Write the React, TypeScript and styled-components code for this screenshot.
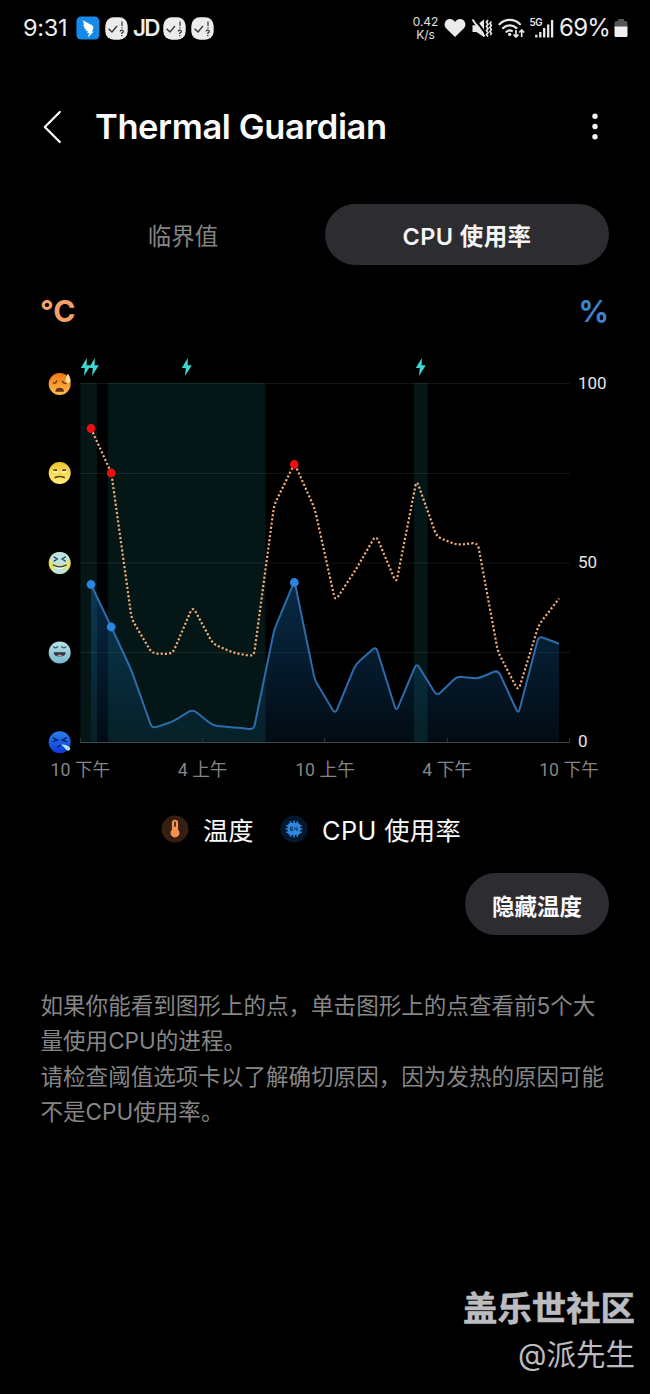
import React from "react";
import styled, { createGlobalStyle } from "styled-components";

const GlobalStyle = createGlobalStyle`
  *, *::before, *::after { box-sizing: border-box; }
  html, body { margin: 0; padding: 0; background: #000; }
  body {
    font-family: Inter, "Noto Sans CJK SC", sans-serif;
    color: #fafafa;
    overflow: hidden;
  }
`;

const Screen = styled.main`
  width: 650px;
  height: 1394px;
  display: flex;
  flex-direction: column;
  background: #000;
  overflow: hidden;
`;

const StatusBar = styled.div`
  height: 56px;
  flex: none;
  display: flex;
  align-items: center;
  justify-content: space-between;
  padding: 0 22px 0 23px;
`;

const StatusGroup = styled.div<{ $gap: number }>`
  display: flex;
  align-items: center;
  gap: ${(p) => p.$gap}px;
`;

const Clock = styled.span`
  font-size: 23.5px;
  line-height: 28px;
  width: 48px;
  letter-spacing: -0.3px;
  white-space: nowrap;
  color: #ececec;
`;

const JdLabel = styled.span`
  width: 25px;
  font-size: 22.5px;
  line-height: 26px;
  font-weight: 600;
  letter-spacing: -1.8px;
  text-align: center;
  color: #ececec;
`;

const NetSpeed = styled.span`
  width: 27px;
  font-size: 12px;
  line-height: 13px;
  letter-spacing: -0.1px;
  text-align: center;
  color: #e0e0e0;
  white-space: nowrap;
`;

const BatteryText = styled.span`
  width: 50px;
  font-size: 24px;
  line-height: 28px;
  letter-spacing: -0.7px;
  white-space: nowrap;
  color: #ececec;
`;

const Header = styled.header`
  height: 142px;
  flex: none;
  display: flex;
  align-items: center;
  padding: 0 45px 0 42px;
`;

const Title = styled.h1`
  flex: 1;
  margin: 0 0 0 32px;
  font-size: 34.5px;
  line-height: 44px;
  font-weight: 600;
  letter-spacing: -0.4px;
  white-space: nowrap;
`;

const Tabs = styled.nav`
  display: flex;
  flex: none;
  height: 61px;
  margin: 6px 41px 0;
`;

const Tab = styled.button<{ $active?: boolean }>`
  flex: 1;
  border: 0;
  padding: 4px 0 0;
  border-radius: 31px;
  background: ${(p) => (p.$active ? "#2d2c30" : "transparent")};
  color: ${(p) => (p.$active ? "#f5f5f5" : "#858585")};
  font: ${(p) => (p.$active ? 600 : 400)} 23.5px/30px Inter, "Noto Sans CJK SC", sans-serif;
  letter-spacing: ${(p) => (p.$active ? 0.4 : 0)}px;
`;

const Units = styled.div`
  display: flex;
  flex: none;
  justify-content: space-between;
  height: 85px;
  padding: 27px 41px 0 40px;
`;

const Unit = styled.span<{ $color: string }>`
  color: ${(p) => p.$color};
  font-size: 30px;
  line-height: 38px;
  font-weight: 700;
`;

const Chart = styled.svg`
  display: block;
  flex: none;
  width: 650px;
  height: 440px;
`;

const Legend = styled.div`
  display: flex;
  flex: none;
  align-items: center;
  height: 40px;
  margin: 19px 0 0 161px;
`;

const LegendItem = styled.div<{ $width: number }>`
  display: flex;
  align-items: center;
  gap: 14px;
  width: ${(p) => p.$width}px;
  font-size: 25.3px;
  line-height: 36px;
  white-space: nowrap;
`;

const LegendLabel = styled.span<{ $spacing?: number }>`
  padding-top: 4px;
  letter-spacing: ${(p) => p.$spacing ?? 0}px;
`;

const Actions = styled.div`
  display: flex;
  flex: none;
  justify-content: flex-end;
  margin: 24px 41px 0 0;
`;

const PillButton = styled.button`
  width: 144px;
  height: 62px;
  border: 0;
  border-radius: 31px;
  background: #2d2c30;
  color: #fafafa;
  padding: 5px 0 0;
  font: 700 22.5px/30px Inter, "Noto Sans CJK SC", sans-serif;
`;

const Notes = styled.section`
  flex: 1;
  margin: 53px 0 0 40.5px;
  font-size: 22.55px;
  line-height: 35.3px;
  color: #868686;
  white-space: nowrap;
`;

const NoteLine = styled.p`
  margin: 0;
`;

const Watermark = styled.footer`
  display: flex;
  flex: none;
  flex-direction: column;
  align-items: flex-end;
  padding: 0 15px 17px 0;
  color: #bcbcc0;
  white-space: nowrap;
`;

const Community = styled.span`
  font-size: 34.4px;
  line-height: 46px;
  font-weight: 700;
  -webkit-text-stroke: 0.6px #bcbcc0;
`;

const Author = styled.span`
  font-size: 29.5px;
  line-height: 45px;
`;

const CheckBadge = () => (
  <svg width="23" height="23" viewBox="0 0 23 23">
    <rect x="0.3" y="0.3" width="22.4" height="22.4" rx="8.5" fill="#ececec" />
    <path d="M3.6 11.8 7 15l5-6" fill="none" stroke="#333" strokeWidth="1.3" />
    <path d="M17 4.5v4.4M17 10.2v1.3M15.2 14.4q0-1.2 1.6-1.2 1.5 0 1.5 1.2 0 .9-1.5 1.7v.9M16.8 18v1.2" fill="none" stroke="#333" strokeWidth="1.2" />
  </svg>
);

const WingIcon = () => (
  <svg width="24" height="24" viewBox="0 0 24 24">
    <rect x="0.4" y="0.6" width="23" height="23" rx="4.5" fill="#168ae8" />
    <path d="M6.8 4.2 15.6 9c1.8 1 2.2 2.200 1.400 4.200L15.800 15.600h1.900L11.900 21.600l1.200-4.500h-1.900l.6-2-2.500-.8.600-.8-2.300-1.900 1.200-.4-1.900-2.300 1.200-.2Z" fill="#fff" />
  </svg>
);

const HeartIcon = () => (
  <svg width="22" height="20" viewBox="0 0 22 20">
    <path d="M11 19 2.300 10.600C.7 9 .3 6.900.8 5 1.500 2.600 3.500 1 5.900 1 8 1 9.700 2 11 3.900 12.300 2 14 1 16.100 1c2.400 0 4.400 1.600 5.100 4 .5 1.900.1 4-1.500 5.600Z" fill="#ececec" />
  </svg>
);

const MuteIcon = () => (
  <svg width="22" height="21" viewBox="-1 0 22 21">
    <path d="M.5 7.300h4L12 1.500v17.500L4.500 14h-4Z" fill="#e8e8e8" />
    <path d="m2.500.3 12 16.500" stroke="#000" strokeWidth="2" />
    <path d="m.5 1.500 12 17" stroke="#e8e8e8" strokeWidth="1.900" />
    <path d="m16 2-1.500 2.100L16 6.200l-1.500 2.100L16 10.400l-1.500 2.100L16 14.600l-1.500 2.100L16 18.500M19.300 3.500l-1.300 2 1.300 2-1.300 2 1.300 2-1.300 2 1.300 2-1 1.400" fill="none" stroke="#e8e8e8" strokeWidth="1.700" />
  </svg>
);

const WifiIcon = () => (
  <svg width="27" height="24" viewBox="0 0 27 24">
    <g fill="none" stroke="#e8e8e8" strokeWidth="2.200" strokeLinecap="round">
      <path d="M1.500 8.200a14.500 14.500 0 0 1 20.500 0M5 12.100a9.600 9.600 0 0 1 13.500 0M8.500 15.800a5 5 0 0 1 5.500-.9" />
    </g>
    <circle cx="11.700" cy="18.400" r="1.700" fill="#e8e8e8" />
    <path d="M18 14v7m-2.500-2.500L18 21l2.500-2.500M23.700 21v-7m-2.500 2.500L23.700 14l2.500 2.500" fill="none" stroke="#e8e8e8" strokeWidth="1.700" />
  </svg>
);

const SignalIcon = () => (
  <svg width="24" height="24" viewBox="0 0 24 24">
    <text x="-0.5" y="9.800" fontSize="9.800" fontWeight="600" letterSpacing="-0.400" fill="#e8e8e8">5G</text>
    <path d="M6.300 18.800v2.700M10.300 16v5.500M14.200 12v9.500M18.200 8.400v13.100M22.100 4v17.500" stroke="#e8e8e8" strokeWidth="2.300" />
  </svg>
);

const BatteryIcon = () => (
  <svg width="14" height="20" viewBox="0 0 14 20">
    <path d="M4 1h6v2h1.500Q13.500 3 13.500 5v4H.5V5q0-2 2-2H4Z" fill="#555" />
    <path d="M.5 8.500h13v9q0 1.500-1.500 1.500H2Q.5 19 .5 17.500Z" fill="#f0f0f0" />
  </svg>
);

const BackIcon = () => (
  <svg width="21" height="34" viewBox="0 0 21 34">
    <path d="M17.800 2 2.800 17l15 15" fill="none" stroke="#fff" strokeWidth="2.200" strokeLinecap="round" strokeLinejoin="round" />
  </svg>
);

const MoreIcon = () => (
  <svg width="20" height="32" viewBox="0 0 20 32" fill="#f4f4f4">
    <circle cx="10" cy="5.300" r="2.700" />
    <circle cx="10" cy="15.500" r="2.700" />
    <circle cx="10" cy="25.700" r="2.700" />
  </svg>
);

const ThermometerBadge = () => (
  <svg width="28" height="28" viewBox="0 0 28 28">
    <circle cx="14" cy="14" r="13.500" fill="#351f13" />
    <path d="M10.900 7.800a3.100 3.100 0 0 1 6.200 0v6.900a4.500 4.500 0 1 1-6.200 0Z" fill="#f59250" />
    <path d="M14 7.500v3.600" stroke="#4b2b18" strokeWidth="1.800" strokeLinecap="round" />
  </svg>
);

const ChipBadge = () => (
  <svg width="28" height="28" viewBox="0 0 28 28">
    <circle cx="14" cy="14" r="13.500" fill="#03182d" />
    <path d="M10.700 6.200v15.600M14 5.600v16.800M17.300 6.200v15.600M6.200 10.700h15.600M5.600 14h16.800M6.200 17.300h15.600" stroke="#2f86dd" strokeWidth="1.600" />
    <rect x="7.700" y="7.900" width="12.600" height="12.200" rx="3" fill="#2f86dd" />
    <path d="M12.800 12.200h-2.200v3.300h2.200v-1.600h-2M14.800 12v2.200h2.600M17 11.800v4" fill="none" stroke="#0a3a6a" strokeWidth="1" />
  </svg>
);

const X0 = 91;
const STEP = 20.35;
const BASE = 742.5;

const temperature = [
  428.5, 473, 619, 653.5, 654, 606.5, 644, 652.7, 656.5, 505, 463.5, 509, 601, 570,
  535, 583, 480, 537, 545, 542.5, 652, 691, 625, 598.5,
];
const cpu = [
  584.5, 627, 671, 728.5, 721.7, 709.3, 725.7, 727.3, 729.5, 630, 581, 680, 714,
  664.5, 646.3, 711.500, 663, 696, 676.3, 678.7, 670, 714, 636, 643.7,
];

type Point = [number, number];

const toPoints = (values: number[]): Point[] =>
  values.map((y, i) => [X0 + STEP * i, y]);

// Polyline whose corners are rounded by a fixed distance along each segment.
const roundedPath = (pts: Point[], radius: number) => {
  const toward = (a: Point, b: Point): Point => {
    const len = Math.hypot(b[0] - a[0], b[1] - a[1]);
    const t = Math.min(radius / len, 0.5);
    return [a[0] + (b[0] - a[0]) * t, a[1] + (b[1] - a[1]) * t];
  };
  let d = `M${pts[0][0]} ${pts[0][1]}`;
  for (let i = 1; i < pts.length - 1; i++) {
    const before = toward(pts[i], pts[i - 1]);
    const after = toward(pts[i], pts[i + 1]);
    d += `L${before[0]} ${before[1]}Q${pts[i][0]} ${pts[i][1]} ${after[0]} ${after[1]}`;
  }
  const last = pts[pts.length - 1];
  return `${d}L${last[0]} ${last[1]}`;
};

const tempPath = roundedPath(toPoints(temperature), 6);
const cpuPath = roundedPath(toPoints(cpu), 5);
const cpuArea = `${cpuPath}V${BASE}H${X0}Z`;

const charging = [
  [80.5, 16.5],
  [108, 157.5],
  [414, 13.5],
];

const Bolt = ({ x }: { x: number }) => (
  <path
    transform={`translate(${x} 358)`}
    d="M6.300 0 .3 10h4L3.500 18 10.300 7.200H6.200Z"
    fill="#3fd6cf"
  />
);

const Faces = () => (
  <g fill="none" strokeLinecap="round">
    <g transform="translate(59.700 384)">
      <circle r="11" fill="url(#hot)" />
      <path d="M-6.500-1q2.500 1 3.500-2M2.500-3q1 3 4 2" stroke="#713114" strokeWidth="1.300" />
      <path d="M-4.300 7.800q0-4 4.300-4t4.300 4Z" fill="#63301f" />
      <path d="M8.300-10.500q3.500 6 2.200 8.500-2 2-4.300 0-1.200-3 2.100-8.500Z" fill="#ffe09a" />
    </g>
    <g transform="translate(59.700 473)">
      <circle r="11" fill="url(#warm)" />
      <ellipse cx="-4.300" cy="-2" rx="3" ry="2" fill="#fff7ba" />
      <ellipse cx="4.300" cy="-2" rx="3" ry="2" fill="#fff7ba" />
      <path d="M-5.700-2.800h2.500M3.200-2.800H5.700M-4.500 4.500q4.500-2 9 0" stroke="#57401a" strokeWidth="1.700" />
    </g>
    <g transform="translate(59.700 563)">
      <circle r="11" fill="#e9e468" />
      <ellipse cy="-4.500" rx="9.300" ry="6.300" fill="#b9e3e6" />
      <ellipse cy="7" rx="7" ry="3.800" fill="#b9e4e0" />
      <path d="M-6.500 2Q0 5.500 6.500 2 5 6 0 6t-6.500-4Z" fill="#fafadc" />
      <path d="m-5.500-6 3 2-3 2M5.500-6 2.500-4l3 2M-6.500 2q6.500 3.700 13 0" stroke="#263c3d" strokeWidth="1.400" />
    </g>
    <g transform="translate(59.700 652.500)">
      <circle r="11" fill="url(#cool)" />
      <path d="M-6-5.500q2 2 4-.3M2-5.800q2 2.300 4 .3" stroke="#31545c" strokeWidth="1.200" />
      <path d="M-6-.3H6Q6 4 0 4t-6-4.300Z" fill="#283a42" />
      <path d="M-2.800 3q2.800-2 5.600 0-2.800 1.700-5.600 0Z" fill="#e48484" />
    </g>
    <g transform="translate(59.700 742.300)">
      <circle r="11" fill="url(#cold)" />
      <path d="m-6.500-4.500 4 2.200-4 1.500M6.500-4.500l-4 2.200 4 1.500M-2 4.500 1 3" stroke="#082075" strokeWidth="1.500" />
      <path d="M1.500 2.500q3.500-1 8 2 2 1.700.5 3.300-2 1.500-4-.8Q4 4 1.500 2.500Z" fill="#a9e5fa" />
    </g>
  </g>
);

const UsageChart = () => (
  <Chart viewBox="0 350 650 440">
    <defs>
      <linearGradient id="area" gradientUnits="userSpaceOnUse" x1="0" y1="582" x2="0" y2="742">
        <stop offset="0" stopColor="#1670bd" stopOpacity="0.380" />
        <stop offset="1" stopColor="#1670bd" stopOpacity="0.100" />
      </linearGradient>
      <linearGradient id="hot" x1="0" y1="0" x2="0" y2="1">
        <stop offset="0" stopColor="#f1760f" /><stop offset="1" stopColor="#ffc04c" />
      </linearGradient>
      <linearGradient id="warm" x1="0" y1="0" x2="0" y2="1">
        <stop offset="0" stopColor="#f0c62f" /><stop offset="1" stopColor="#ffed79" />
      </linearGradient>
      <linearGradient id="cool" x1="0" y1="0" x2="0" y2="1">
        <stop offset="0" stopColor="#b8e2e8" /><stop offset="1" stopColor="#78b7cf" />
      </linearGradient>
      <linearGradient id="cold" x1="0" y1="0" x2="0" y2="1">
        <stop offset="0" stopColor="#2a83ea" /><stop offset="1" stopColor="#0d35d6" />
      </linearGradient>
    </defs>

    {charging.map(([x, width]) => (
      <rect key={x} x={x} y="383" width={width} height="359.500" fill="#041716" />
    ))}
    {[383.5, 473.5, 563, 652.5].map((y) => (
      <path key={y} d={`M80 ${y}H570`} stroke="#fff" strokeOpacity="0.080" />
    ))}
    <path d={cpuArea} fill="url(#area)" />
    <path d={`M80 ${BASE}H570`} stroke="#42474a" />
    {[80.5, 202.5, 324.5, 447.5, 569.5].map((x) => (
      <path key={x} d={`M${x} 738v4`} stroke="#2c3032" />
    ))}
    <path d={cpuPath} fill="none" stroke="#2d6cab" strokeWidth="2" />
    <path d={tempPath} fill="none" stroke="#f2ad78" strokeWidth="2.200" strokeDasharray="2.100 2.100" />
    {[[91, 428.5], [111.2, 473], [294.3, 464.5]].map(([x, y]) => (
      <circle key={x} cx={x} cy={y} r="4.400" fill="#ea1010" />
    ))}
    {[[91, 584.5], [111.2, 627], [294.3, 582.5]].map(([x, y]) => (
      <circle key={x} cx={x} cy={y} r="4.400" fill="#2a85e0" />
    ))}

    <Bolt x={80.5} />
    <Bolt x={88.5} />
    <Bolt x={181.5} />
    <Bolt x={415.5} />
    <Faces />

    <g fontFamily='Roboto, "Noto Sans CJK SC", sans-serif' fontSize="17" fill="#e6e6e6">
      <text x="578" y="389">100</text>
      <text x="578" y="568">50</text>
      <text x="578" y="747">0</text>
    </g>
    <g fontFamily='Roboto, "Noto Sans CJK SC", sans-serif' fontSize="17.700" fill="#858585" textAnchor="middle">
      <text x="80.300" y="776.300">10 下午</text>
      <text x="202.700" y="776.300">4 上午</text>
      <text x="325" y="776.300">10 上午</text>
      <text x="447.200" y="776.300">4 下午</text>
      <text x="569" y="776.300">10 下午</text>
    </g>
  </Chart>
);

export default function App() {
  return (
    <>
      <GlobalStyle />
      <Screen>
        <StatusBar>
          <StatusGroup $gap={5}>
            <Clock>9:31</Clock>
            <WingIcon />
            <CheckBadge />
            <JdLabel>JD</JdLabel>
            <CheckBadge />
            <CheckBadge />
          </StatusGroup>
          <StatusGroup $gap={5}>
            <NetSpeed>0.42<br />K/s</NetSpeed>
            <HeartIcon />
            <MuteIcon />
            <WifiIcon />
            <SignalIcon />
            <BatteryText>69%</BatteryText>
            <BatteryIcon />
          </StatusGroup>
        </StatusBar>
        <Header>
          <BackIcon />
          <Title>Thermal Guardian</Title>
          <MoreIcon />
        </Header>
        <Tabs>
          <Tab>临界值</Tab>
          <Tab $active>CPU 使用率</Tab>
        </Tabs>
        <Units>
          <Unit $color="#f5a066">°C</Unit>
          <Unit $color="#3b82cf">%</Unit>
        </Units>
        <UsageChart />
        <Legend>
          <LegendItem $width={119}>
            <ThermometerBadge />
            <LegendLabel>温度</LegendLabel>
          </LegendItem>
          <LegendItem $width={190}>
            <ChipBadge />
            <LegendLabel $spacing={0.4}>CPU 使用率</LegendLabel>
          </LegendItem>
        </Legend>
        <Actions>
          <PillButton>隐藏温度</PillButton>
        </Actions>
        <Notes>
          <NoteLine>如果你能看到图形上的点，单击图形上的点查看前5个大</NoteLine>
          <NoteLine>量使用CPU的进程。</NoteLine>
          <NoteLine>请检查阈值选项卡以了解确切原因，因为发热的原因可能</NoteLine>
          <NoteLine>不是CPU使用率。</NoteLine>
        </Notes>
        <Watermark>
          <Community>盖乐世社区</Community>
          <Author>@派先生</Author>
        </Watermark>
      </Screen>
    </>
  );
}
